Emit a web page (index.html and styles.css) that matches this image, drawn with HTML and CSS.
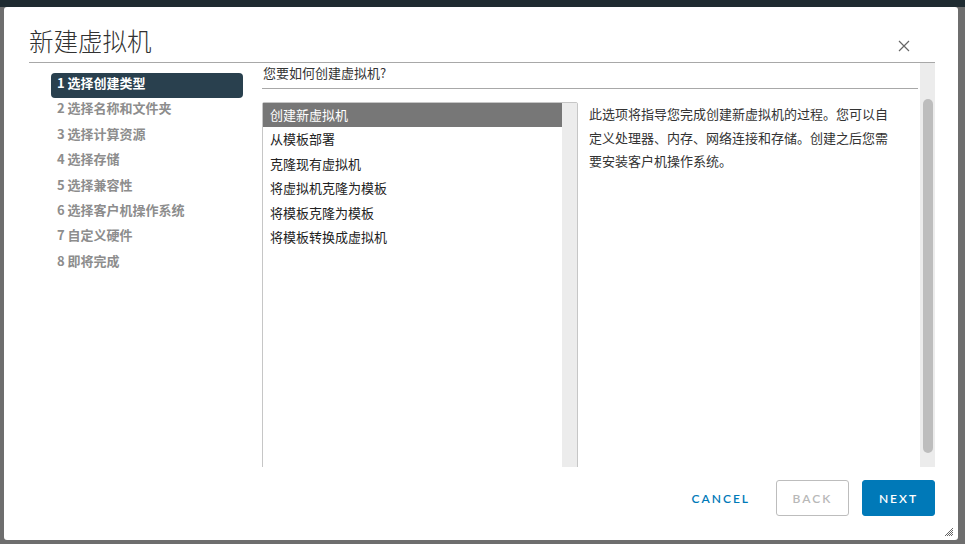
FILE: index.html
```html
<!DOCTYPE html>
<html lang="zh-CN">
<head>
  <meta charset="UTF-8">
  <title>新建虚拟机</title>
  <link rel="stylesheet" href="styles.css">
</head>
<body>
  <div class="modal">
    <div class="modal-header">
      <h3 class="modal-title">新建虚拟机</h3>
      <button class="close" aria-label="关闭">
        <svg width="12" height="12" viewBox="0 0 12 12"><path d="M1 1 L11 11 M11 1 L1 11" stroke="#666" stroke-width="1.2" fill="none"/></svg>
      </button>
    </div>

    <div class="modal-body">
      <div class="wizard">
        <!-- 步骤导航 -->
        <ul class="steps">
          <li class="active">1 选择创建类型</li>
          <li>2 选择名称和文件夹</li>
          <li>3 选择计算资源</li>
          <li>4 选择存储</li>
          <li>5 选择兼容性</li>
          <li>6 选择客户机操作系统</li>
          <li>7 自定义硬件</li>
          <li>8 即将完成</li>
        </ul>

        <div class="page">
          <div class="page-title">您要如何创建虚拟机?</div>
          <div class="create-type">
            <div class="type-list">
              <ul class="type-items">
                <li class="selected">创建新虚拟机</li>
                <li>从模板部署</li>
                <li>克隆现有虚拟机</li>
                <li>将虚拟机克隆为模板</li>
                <li>将模板克隆为模板</li>
                <li>将模板转换成虚拟机</li>
              </ul>
              <div class="list-track"></div>
            </div>
            <p class="type-desc">此选项将指导您完成创建新虚拟机的过程。您可以自定义处理器、内存、网络连接和存储。创建之后您需要安装客户机操作系统。</p>
          </div>
        </div>
      </div>

      <div class="scrollbar"><div class="thumb"></div></div>
    </div>

    <div class="modal-footer">
      <button class="btn btn-link">CANCEL</button>
      <button class="btn btn-outline" disabled>BACK</button>
      <button class="btn btn-primary">NEXT</button>
    </div>

    <svg class="grip" width="8" height="8" viewBox="0 0 8 8">
      <path d="M0 8 L8 0 M2 8 L8 2 M4 8 L8 4 M6 8 L8 6" stroke="#555" stroke-width="0.9"/>
    </svg>
  </div>
</body>
</html>
```

FILE: styles.css
```css
body {
  margin: 0;
  height: 544px;
  overflow: hidden;
  font-family: 'Noto Sans CJK SC', 'Noto Sans', sans-serif;
  background: linear-gradient(#1f2b31 0, #1f2b31 7px, #6e6e6e 7px);
  color: #333;
}

.modal {
  position: relative;
  margin: 7px 7px 0 4px;
  height: 533px;
  background-color: #fff;
  border-radius: 3px;
  display: flex;
  flex-direction: column;
}

.modal-header {
  display: flex;
  justify-content: space-between;
  align-items: flex-start;
  height: 55px;
  margin: 0 23px 0 25px;
  border-bottom: 1px solid #a8a8a8;
}

.modal-title {
  margin: 18px 0 0 0;
  font-size: 24.5px;
  line-height: 32px;
  font-weight: 300;
  color: #313131;
}

.close {
  margin: 33px 25px 0 0;
  padding: 0;
  width: 12px;
  height: 12px;
  border: none;
  background: none;
  cursor: pointer;
  line-height: 0;
}

.modal-body {
  display: flex;
  height: 404px;
  margin: 0 23px 0 25px;
  overflow: hidden;
}

.wizard {
  flex: 1;
  display: flex;
  gap: 19px;
  padding-left: 22px;
}

.steps {
  list-style: none;
  margin: 0;
  padding: 10px 0 0 0;
  width: 192px;
  flex-shrink: 0;
}

.steps li {
  height: 25.4px;
  line-height: 20px;
  padding-left: 6px;
  font-size: 13px;
  font-weight: 600;
  color: #8d8d8d;
  border-radius: 4px;
  box-sizing: border-box;
}

.steps li.active {
  height: 24.6px;
  margin-bottom: 0.8px;
  padding-top: 0;
  background-color: #29404e;
  color: #fff;
  font-weight: 700;
}

.page {
  width: 656px;
}

.page-title {
  padding: 0 0 5px 1px;
  line-height: 20px;
  font-size: 13px;
  color: #333;
  border-bottom: 1px solid #a8a8a8;
}

.create-type {
  display: flex;
  gap: 11px;
  margin-top: 13px;
}

.type-list {
  display: flex;
  width: 314px;
  height: 400px;
  border: 1px solid #c6c6c6;
  border-radius: 2px 2px 0 0;
  flex-shrink: 0;
}

.type-items {
  flex: 1;
  list-style: none;
  margin: 0;
  padding: 0;
}

.type-items li {
  height: 24.4px;
  line-height: 23px;
  padding-left: 7px;
  font-size: 13px;
  color: #222;
}

.type-items li.selected {
  background-color: #777;
  color: #fff;
}

.list-track {
  width: 15px;
  background-color: #ececec;
}

.type-desc {
  margin: 0;
  width: 306px;
  font-size: 13px;
  line-height: 23.5px;
  color: #333;
}

.scrollbar {
  width: 15px;
  background-color: #ececec;
  flex-shrink: 0;
  padding-top: 36px;
}

.thumb {
  width: 10px;
  height: 354px;
  margin-left: 3px;
  background-color: #bdbdbd;
  border-radius: 5px;
}

.modal-footer {
  display: flex;
  justify-content: flex-end;
  gap: 13px;
  padding: 13px 23px 0 0;
}

.btn {
  height: 36px;
  padding: 0 12px;
  min-width: 73px;
  border-radius: 3px;
  font-family: 'Lato', 'Noto Sans', sans-serif;
  font-size: 12px;
  font-weight: 600;
  letter-spacing: 2px;
  cursor: pointer;
}

.btn-link {
  border: 1px solid transparent;
  background: none;
  color: #0079b8;
}

.btn-outline {
  border: 1px solid #bdbdbd;
  background-color: #fff;
  color: #b8b8b8;
  cursor: default;
}

.btn-primary {
  border: 1px solid #0079b8;
  background-color: #0079b8;
  color: #fff;
}

.grip {
  position: absolute;
  right: 5px;
  bottom: 4px;
}
```
